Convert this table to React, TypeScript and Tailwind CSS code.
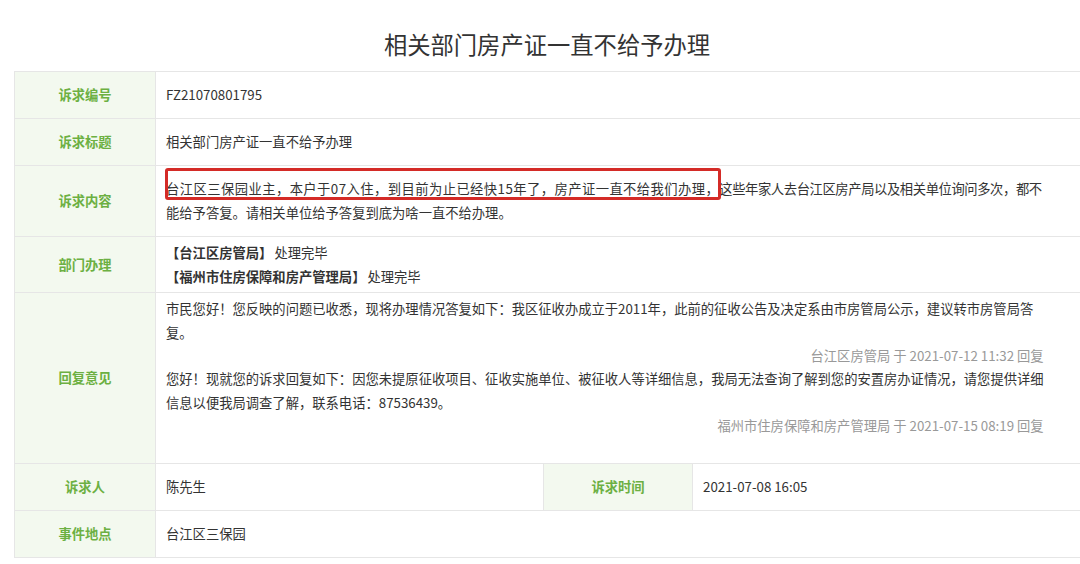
import React from "react";

const font = { fontFamily: '"Noto Sans CJK SC", "Noto Sans", sans-serif' };

function Label({ children, className = "" }: { children: React.ReactNode; className?: string }) {
  return (
    <div
      className={`flex items-center justify-center bg-[#f3f9ef] border-r border-[#e6e6e6] text-[13.3px] font-bold text-[#6cb042] ${className}`}
    >
      {children}
    </div>
  );
}

function Row({ h, label, children }: { h: string; label: string; children: React.ReactNode }) {
  return (
    <div className={`flex border-b border-[#e6e6e6] ${h}`}>
      <Label className="w-[141px] shrink-0">{label}</Label>
      <div className="flex-1 flex items-center pl-[10px] pr-[43px] text-[13.3px] leading-[24px] text-[#333]">
        <div className="w-full">{children}</div>
      </div>
    </div>
  );
}

export default function App() {
  return (
    <div className="w-[1080px] h-[564px] bg-white overflow-hidden" style={font}>
      <div className="ml-[14px] w-[1066px]">
        <h1 className="h-[71px] flex items-center justify-center pt-[17px] text-[23.3px] text-[#333] font-normal">
          相关部门房产证一直不给予办理
        </h1>
        <div className="border-t border-l border-[#e6e6e6]">
          <Row h="h-[47px]" label="诉求编号">FZ21070801795</Row>
          <Row h="h-[47px]" label="诉求标题">相关部门房产证一直不给予办理</Row>
          <Row h="h-[71px]" label="诉求内容">
            <div className="relative">
              {/* 截图上的红框标注 */}
              <span className="absolute left-[-1px] top-[-9px] w-[556px] h-[32px] border-[3px] border-[#d42b27] rounded-[3px]" />
              <div className="whitespace-nowrap">
                <span className="tracking-[0.44px]">
                  台江区三保园业主，本户于07入住，到目前为止已经快15年了，房产证一直不给我们办理，
                </span>
                <span className="tracking-[-0.4px]">这些年家人去台江区房产局以及相关单位询问多次，都不</span>
              </div>
              <div className="whitespace-nowrap">能给予答复。请相关单位给予答复到底为啥一直不给办理。</div>
            </div>
          </Row>
          <Row h="h-[56px]" label="部门办理">
            <div>
              <span className="font-bold">【台江区房管局】</span>
              <span className="ml-[2px]">处理完毕</span>
            </div>
            <div>
              <span className="font-bold">【福州市住房保障和房产管理局】</span>
              <span className="ml-[2px]">处理完毕</span>
            </div>
          </Row>
          <div className="flex border-b border-[#e6e6e6] h-[171px]">
            <Label className="w-[141px] shrink-0">回复意见</Label>
            <div className="flex-1 pl-[10px] pr-[43px] pt-[4px] text-[13.3px] text-[#333]">
              <div className="leading-[24px] whitespace-nowrap">
                <div>
                  市民您好！您反映的问题已收悉，现将办理情况答复如下：我区征收办成立于2011年，此前的征收公告及决定系由市房管局公示，建议转市房管局答
                </div>
                <div>复。</div>
              </div>
              <p className="leading-[22px] text-right text-[#999]">台江区房管局 于 2021-07-12 11:32 回复</p>
              <div className="leading-[24px] whitespace-nowrap">
                <div>
                  您好！现就您的诉求回复如下：因您未提原征收项目、征收实施单位、被征收人等详细信息，我局无法查询了解到您的安置房办证情况，请您提供详细
                </div>
                <div>信息以便我局调查了解，联系电话：87536439。</div>
              </div>
              <p className="leading-[22px] text-right text-[#999]">福州市住房保障和房产管理局 于 2021-07-15 08:19 回复</p>
            </div>
          </div>
          <div className="flex border-b border-[#e6e6e6] h-[47px] text-[13.3px] text-[#333]">
            <Label className="w-[141px] shrink-0">诉求人</Label>
            <div className="w-[388px] shrink-0 flex items-center pl-[10px] border-r border-[#e6e6e6]">陈先生</div>
            <Label className="w-[149px] shrink-0">诉求时间</Label>
            <div className="flex-1 flex items-center pl-[10px]">2021-07-08 16:05</div>
          </div>
          <Row h="h-[47px]" label="事件地点">台江区三保园</Row>
        </div>
      </div>
    </div>
  );
}
